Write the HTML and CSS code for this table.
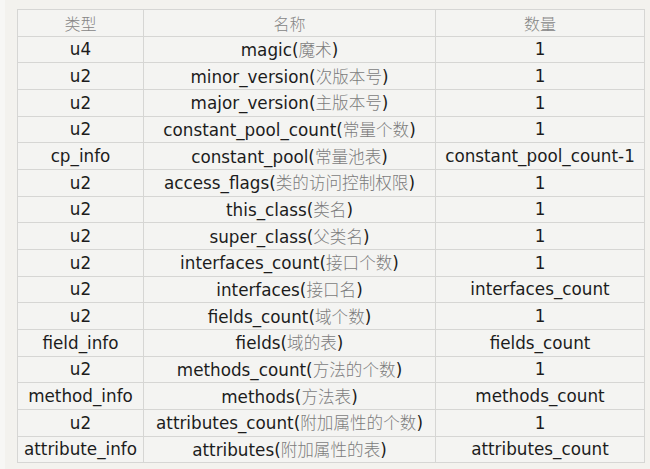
FILE: index.html
```html
<!DOCTYPE html>
<html lang="zh">
<head>
<meta charset="utf-8">
<link rel="stylesheet" href="styles.css">
</head>
<body>
<div class="page">
<table class="tbl">
<colgroup><col class="c1"><col class="c2"><col class="c3"></colgroup>
<tr class="head"><th>类型</th><th>名称</th><th>数量</th></tr>
<tr><td>u4</td><td>magic(<span class="zh">魔术</span>)</td><td>1</td></tr>
<tr><td>u2</td><td>minor_version(<span class="zh">次版本号</span>)</td><td>1</td></tr>
<tr><td>u2</td><td>major_version(<span class="zh">主版本号</span>)</td><td>1</td></tr>
<tr><td>u2</td><td>constant_pool_count(<span class="zh">常量个数</span>)</td><td>1</td></tr>
<tr><td>cp_info</td><td>constant_pool(<span class="zh">常量池表</span>)</td><td>constant_pool_count-1</td></tr>
<tr><td>u2</td><td>access_flags(<span class="zh">类的访问控制权限</span>)</td><td>1</td></tr>
<tr><td>u2</td><td>this_class(<span class="zh">类名</span>)</td><td>1</td></tr>
<tr><td>u2</td><td>super_class(<span class="zh">父类名</span>)</td><td>1</td></tr>
<tr><td>u2</td><td>interfaces_count(<span class="zh">接口个数</span>)</td><td>1</td></tr>
<tr><td>u2</td><td>interfaces(<span class="zh">接口名</span>)</td><td>interfaces_count</td></tr>
<tr><td>u2</td><td>fields_count(<span class="zh">域个数</span>)</td><td>1</td></tr>
<tr><td>field_info</td><td>fields(<span class="zh">域的表</span>)</td><td>fields_count</td></tr>
<tr><td>u2</td><td>methods_count(<span class="zh">方法的个数</span>)</td><td>1</td></tr>
<tr><td>method_info</td><td>methods(<span class="zh">方法表</span>)</td><td>methods_count</td></tr>
<tr><td>u2</td><td>attributes_count(<span class="zh">附加属性的个数</span>)</td><td>1</td></tr>
<tr><td>attribute_info</td><td>attributes(<span class="zh">附加属性的表</span>)</td><td>attributes_count</td></tr>
</table>
</div>
</body>
</html>
```
FILE: styles.css
```css
html, body {
  margin: 0;
  padding: 0;
  background: #f3f2ee;
}
.page {
  width: 650px;
  height: 469px;
  box-sizing: border-box;
  padding: 9px 0 0 17px;
  background: linear-gradient(to right, #f7f7f5 0, #f7f7f5 5px, #f3f2ee 5px);
  overflow: hidden;
}
.tbl {
  border-collapse: collapse;
  table-layout: fixed;
  width: 627px;
  font-family: "DejaVu Sans", Verdana, sans-serif;
  font-size: 16.8px;
  color: #1c1c1c;
  background: #f4f4f2;
}
.c1 { width: 126px; }
.c2 { width: 292px; }
.c3 { width: 209px; }
.tbl td, .tbl th {
  border: 1px solid #d6d6d4;
  height: 25.67px;
  padding: 0;
  text-align: center;
  vertical-align: middle;
  white-space: nowrap;
  line-height: 20px;
}
.tbl th {
  font-weight: 300;
  font-family: "Noto Sans CJK SC", sans-serif;
  color: #858585;
  font-size: 16px;
}
.zh {
  font-family: "Noto Sans CJK SC", sans-serif;
  font-weight: 300;
  font-size: 16.6px;
  color: #7c7c7c;
}
```
